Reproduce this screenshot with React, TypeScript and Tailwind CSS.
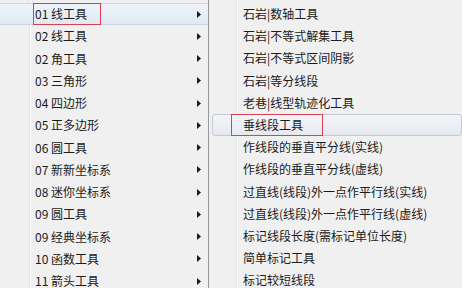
import React from "react";

const left = [
  "01 线工具",
  "02 线工具",
  "02 角工具",
  "03 三角形",
  "04 四边形",
  "05 正多边形",
  "06 圆工具",
  "07 新新坐标系",
  "08 迷你坐标系",
  "09 圆工具",
  "09 经典坐标系",
  "10 函数工具",
  "11 箭头工具",
];

const right = [
  "石岩|数轴工具",
  "石岩|不等式解集工具",
  "石岩|不等式区间阴影",
  "石岩|等分线段",
  "老巷|线型轨迹化工具",
  "垂线段工具",
  "作线段的垂直平分线(实线)",
  "作线段的垂直平分线(虚线)",
  "过直线(线段)外一点作平行线(实线)",
  "过直线(线段)外一点作平行线(虚线)",
  "标记线段长度(需标记单位长度)",
  "简单标记工具",
  "标记较短线段",
];

function Arrow() {
  return (
    <svg width="4" height="7" viewBox="0 0 4 7" className="block">
      <path d="M0 0 L4 3.5 L0 7 Z" fill="#1a1a1a" />
    </svg>
  );
}

export default function App() {
  return (
    <div
      className="w-[462px] h-[288px] overflow-hidden bg-[#f0f0f0] flex text-[12px] text-[#1b1b1b]"
      style={{ fontFamily: '"Noto Sans CJK SC", "Noto Sans", sans-serif' }}
    >
      {/* left menu */}
      <div className="w-[209px] shrink-0 flex flex-col border-r border-[#979797] pt-[3px] bg-[linear-gradient(to_right,#f0f0f0_29px,#e2e3e3_29px,#e2e3e3_30px,#ffffff_30px,#ffffff_31px,#f0f0f0_31px)]">
        {left.map((t, i) =>
          i === 0 ? (
            <div
              key={i}
              className="h-[22.25px] shrink-0 flex items-center pl-[33px] pr-[6px] bg-gradient-to-b from-[#eef3f9] to-[#e1e8f1] border-y border-[#c9d5e3]"
            >
              <span className="flex-1 flex">
                <span className="w-[68px] h-[22px] flex items-center pl-[1px] border border-[#d9414f] leading-none whitespace-nowrap">
                  {t}
                </span>
              </span>
              <span className="mr-[1px]">
                <Arrow />
              </span>
            </div>
          ) : (
            <div
              key={i}
              className="h-[22.25px] shrink-0 flex items-center pl-[35px] pr-[6px]"
            >
              <span className="flex-1 leading-none whitespace-nowrap">{t}</span>
              <span className="mr-[1px]">
                <Arrow />
              </span>
            </div>
          )
        )}
      </div>
      {/* right menu */}
      <div className="flex-1 flex flex-col pt-[3px] bg-[linear-gradient(to_right,#f0f0f0_27px,#e2e3e3_27px,#e2e3e3_28px,#ffffff_28px,#ffffff_29px,#f0f0f0_29px)]">
        {right.map((t, i) =>
          i === 5 ? (
            <div
              key={i}
              className="h-[22.2px] shrink-0 flex items-center ml-[3px] pl-[18px] rounded-[3px] bg-gradient-to-b from-[#f3f5f8] to-[#e6eaef] border border-[#c3cad3]"
            >
              <span className="w-[92px] h-[22px] flex items-center pl-[11px] border border-[#d9414f] leading-none whitespace-nowrap">
                {t}
              </span>
            </div>
          ) : (
            <div key={i} className="h-[22.2px] shrink-0 flex items-center pl-[34px]">
              <span className="leading-none whitespace-nowrap">{t}</span>
            </div>
          )
        )}
      </div>
    </div>
  );
}
